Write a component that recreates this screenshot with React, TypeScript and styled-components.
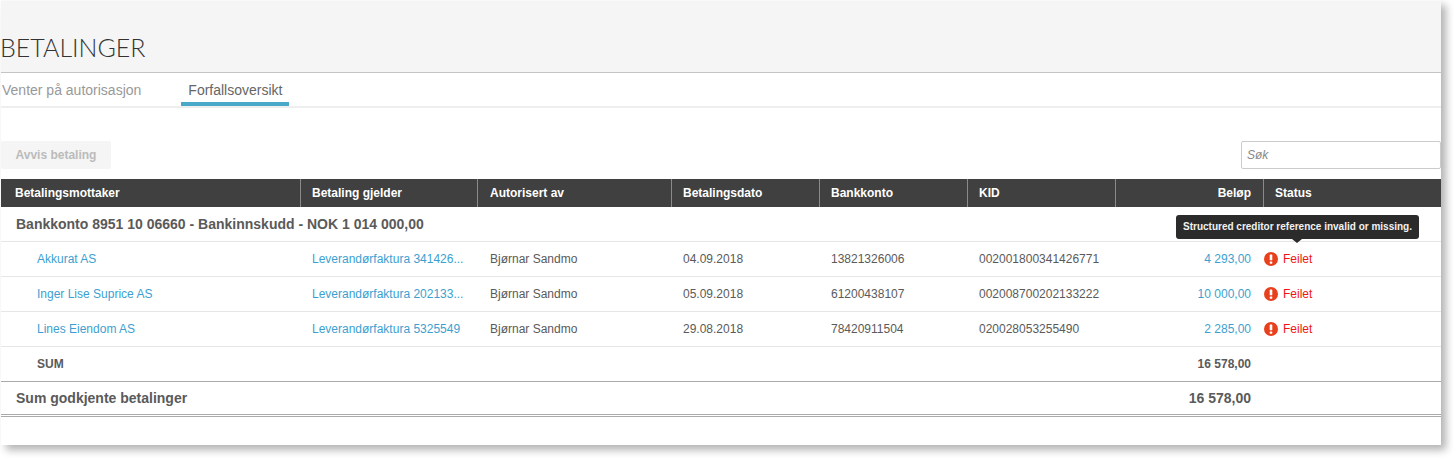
import React from 'react';
import styled, { createGlobalStyle } from 'styled-components';

const GlobalStyle = createGlobalStyle`
	html, body {
		margin: 0;
		padding: 0;
		background: #fff;
		font-family: "Liberation Sans", Arial, sans-serif;
	}
	* {
		box-sizing: border-box;
	}
`;

const Page = styled.div`
	width: 1454px;
	height: 458px;
	padding-left: 1px;
	overflow: hidden;
`;

const Panel = styled.div`
	width: 1440px;
	height: 445px;
	background: #fff;
	box-shadow: 5px 5px 8px rgba(0, 0, 0, 0.3);
`;

const Header = styled.header`
	height: 73px;
	background: #f5f5f5;
	border-top: 1px solid #f9f9f9;
	border-bottom: 1px solid #c4c4c4;
	display: flex;
	align-items: flex-end;
	padding-bottom: 9px;

	h1 {
		margin: 0 0 0 -1px;
		font-family: Lato, sans-serif;
		font-weight: 300;
		font-size: 25px;
		line-height: 32px;
		color: #333;
	}
`;

const Tabs = styled.nav`
	height: 35px;
	display: flex;
	border-bottom: 2px solid #eee;
`;

const Tab = styled.a<{ $active?: boolean }>`
	height: 33px;
	font-size: 14px;
	line-height: 35px;
	padding: 0 7px 0 ${(p) => (p.$active ? '7px' : '1px')};
	margin-right: ${(p) => (p.$active ? '0' : '33px')};
	color: ${(p) => (p.$active ? '#666' : '#999')};
	border-bottom: ${(p) => (p.$active ? '4px solid #4aa9c9' : 'none')};
`;

const Toolbar = styled.div`
	height: 71px;
	padding-bottom: 10px;
	display: flex;
	justify-content: space-between;
	align-items: flex-end;
`;

const RejectButton = styled.button`
	width: 110px;
	height: 28px;
	border: none;
	border-radius: 2px;
	background: #f5f5f5;
	color: #bbb;
	font-family: inherit;
	font-size: 12px;
	font-weight: bold;
	padding: 0;
`;

const SearchInput = styled.input`
	width: 200px;
	height: 28px;
	border: 1px solid #ccc;
	border-radius: 2px;
	padding: 0 5px;
	font-family: inherit;
	font-size: 12px;
	font-style: italic;
	color: #666;
	outline: none;

	&::placeholder {
		color: #888;
	}
`;

const Table = styled.table`
	width: 1440px;
	table-layout: fixed;
	border-collapse: separate;
	border-spacing: 0;
	font-size: 12px;
	color: #5a5a5a;
`;

const HeadCell = styled.th<{ $right?: boolean }>`
	height: 28px;
	padding: 0 12px 0 11px;
	background: #404040;
	color: #fff;
	font-weight: bold;
	font-size: 12px;
	text-align: ${(p) => (p.$right ? 'right' : 'left')};
	border-left: 1px solid #8a8a8a;

	&:first-child {
		border-left: none;
		padding-left: 14px;
	}

	&:nth-child(3) {
		padding-left: 12px;
	}
`;

const GroupCell = styled.td`
	height: 35px;
	padding: 0 0 1px 15px;
	font-size: 14px;
	font-weight: bold;
	border-bottom: 1px solid #e6e6e6;
`;

const Cell = styled.td<{ $indent?: boolean; $right?: boolean; $bold?: boolean }>`
	height: 35px;
	padding: 0 12px 0 ${(p) => (p.$indent ? '36px' : '12px')};
	border-bottom: 1px solid #e6e6e6;
	text-align: ${(p) => (p.$right ? 'right' : 'left')};
	font-weight: ${(p) => (p.$bold ? 'bold' : 'normal')};
	white-space: nowrap;
	overflow: hidden;
	text-overflow: ellipsis;

	&:nth-child(3) {
		padding-left: 13px;
	}
`;

const SumRow = styled.tr`
	td {
		border-bottom: 1px solid #aaa;
	}
`;

const TotalCell = styled.td<{ $right?: boolean }>`
	height: 35px;
	padding: 0 12px 0 15px;
	font-size: 14px;
	font-weight: bold;
	text-align: ${(p) => (p.$right ? 'right' : 'left')};
	border-bottom: 3px double #aaa;
`;

const Link = styled.a`
	color: #3c9fd0;
`;

const StatusCell = styled.td`
	position: relative;
	height: 35px;
	border-bottom: 1px solid #e6e6e6;
	padding: 0 0 0 1px;
	color: #f01414;
	overflow: visible;
`;

const Status = styled.span`
	display: flex;
	align-items: center;
	gap: 5px;
`;

const Tooltip = styled.div`
	position: absolute;
	left: -87px;
	top: -27px;
	width: 243px;
	height: 24px;
	background: #2b2b2b;
	color: #f2f2f2;
	border-radius: 3px;
	font-size: 10px;
	font-weight: bold;
	line-height: 24px;
	text-align: center;
	white-space: nowrap;

	&::after {
		content: '';
		position: absolute;
		left: 116px;
		bottom: -4px;
		border-left: 5px solid transparent;
		border-right: 5px solid transparent;
		border-top: 4px solid #2b2b2b;
	}
`;

const ErrorIcon = () => (
	<svg width="14" height="14" viewBox="0 0 14 14">
		<circle cx="7" cy="7" r="7" fill="#e8401c" />
		<rect x="5.7" y="2.4" width="2.6" height="5.9" rx="0.6" fill="#fff" />
		<rect x="5.7" y="9.4" width="2.6" height="2.3" rx="0.6" fill="#fff" />
	</svg>
);

const widths = [299, 177, 194, 148, 148, 148, 148, 178];

const rows = [
	{ name: 'Akkurat AS', ref: 'Leverandørfaktura 341426...', date: '04.09.2018', account: '13821326006', kid: '002001800341426771', amount: '4 293,00' },
	{ name: 'Inger Lise Suprice AS', ref: 'Leverandørfaktura 202133...', date: '05.09.2018', account: '61200438107', kid: '002008700202133222', amount: '10 000,00' },
	{ name: 'Lines Eiendom AS', ref: 'Leverandørfaktura 5325549', date: '29.08.2018', account: '78420911504', kid: '020028053255490', amount: '2 285,00' },
];

export default function App(): React.JSX.Element {
	return (
		<Page>
			<GlobalStyle />
			<Panel>
				<Header>
					<h1>BETALINGER</h1>
				</Header>
				<Tabs>
					<Tab>Venter på autorisasjon</Tab>
					<Tab $active>Forfallsoversikt</Tab>
				</Tabs>
				<Toolbar>
					<RejectButton>Avvis betaling</RejectButton>
					<SearchInput placeholder="Søk" />
				</Toolbar>
				<Table>
					<colgroup>
						{widths.map((w, i) => (
							<col key={i} width={w} />
						))}
					</colgroup>
					<thead>
						<tr>
							<HeadCell>Betalingsmottaker</HeadCell>
							<HeadCell>Betaling gjelder</HeadCell>
							<HeadCell>Autorisert av</HeadCell>
							<HeadCell>Betalingsdato</HeadCell>
							<HeadCell>Bankkonto</HeadCell>
							<HeadCell>KID</HeadCell>
							<HeadCell $right>Beløp</HeadCell>
							<HeadCell>Status</HeadCell>
						</tr>
					</thead>
					<tbody>
						<tr>
							<GroupCell colSpan={8}>Bankkonto 8951 10 06660 - Bankinnskudd - NOK 1 014 000,00</GroupCell>
						</tr>
						{rows.map((row, i) => (
							<tr key={row.name}>
								<Cell $indent>
									<Link>{row.name}</Link>
								</Cell>
								<Cell>
									<Link>{row.ref}</Link>
								</Cell>
								<Cell>Bjørnar Sandmo</Cell>
								<Cell>{row.date}</Cell>
								<Cell>{row.account}</Cell>
								<Cell>{row.kid}</Cell>
								<Cell $right>
									<Link>{row.amount}</Link>
								</Cell>
								<StatusCell>
									<Status>
										<ErrorIcon />
										Feilet
									</Status>
									{i === 0 && <Tooltip>Structured creditor reference invalid or missing.</Tooltip>}
								</StatusCell>
							</tr>
						))}
						<SumRow>
							<Cell $indent $bold>SUM</Cell>
							<Cell />
							<Cell />
							<Cell />
							<Cell />
							<Cell />
							<Cell $right $bold>16 578,00</Cell>
							<Cell />
						</SumRow>
						<tr>
							<TotalCell colSpan={6}>Sum godkjente betalinger</TotalCell>
							<TotalCell $right>16 578,00</TotalCell>
							<TotalCell />
						</tr>
					</tbody>
				</Table>
			</Panel>
		</Page>
	);
}
